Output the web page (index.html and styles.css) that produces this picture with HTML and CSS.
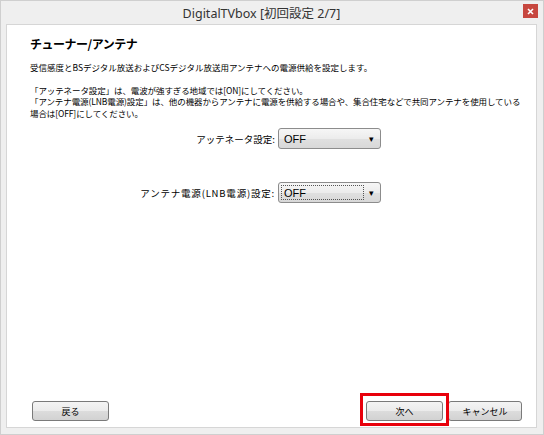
FILE: index.html
```html
<!DOCTYPE html>
<html lang="ja">
<head>
    <meta charset="UTF-8">
    <title>DigitalTVbox [初回設定 2/7]</title>
    <link rel="stylesheet" href="styles.css">
</head>
<body>
    <div class="window">
        <div class="titlebar">
            <span></span>
            <span class="title">DigitalTVbox [初回設定 2/7]</span>
            <span class="close">
                <svg width="7" height="7" viewBox="0 0 7 7">
                    <path d="M1 1 L6 6 M6 1 L1 6" stroke="#fff" stroke-width="1.6"/>
                </svg>
            </span>
        </div>

        <div class="panel">
            <h1>チューナー/アンテナ</h1>
            <p class="lead">受信感度とBSデジタル放送およびCSデジタル放送用アンテナへの電源供給を設定します。</p>
            <p class="note">
                「アッテネータ設定」は、電波が強すぎる地域では[ON]にしてください。<br>
                「アンテナ電源(LNB電源)設定」は、他の機器からアンテナに電源を供給する場合や、集合住宅などで共同アンテナを使用している<br>
                場合は[OFF]にしてください。
            </p>

            <div class="settings">
                <label>アッテネータ設定:</label>
                <div class="combo">
                    <span class="value">OFF</span>
                    <span class="arrow">▾</span>
                </div>

                <label class="wide">アンテナ電源(LNB電源)設定:</label>
                <div class="combo focused">
                    <span class="value">OFF</span>
                    <span class="arrow">▾</span>
                </div>
            </div>

            <div class="footer">
                <button class="btn back">戻る</button>
                <div class="right">
                    <span class="mark">
                        <button class="btn">次へ</button>
                    </span>
                    <button class="btn cancel">キャンセル</button>
                </div>
            </div>
        </div>
    </div>
</body>
</html>
```

FILE: styles.css
```css
body {
    margin: 0;
    font-family: "Noto Sans CJK JP", sans-serif;
    color: #000;
}
.window {
    width: 544px;
    height: 435px;
    box-sizing: border-box;
    border: 1px solid #cfcfcf;
    background-color: #efefef;
    display: flex;
    flex-direction: column;
}
.titlebar {
    height: 23px;
    display: grid;
    grid-template-columns: 1fr auto 1fr;
    align-items: center;
    padding-right: 5px;
}
.title {
    font-family: "Noto Sans", "Noto Sans CJK JP", sans-serif;
    font-size: 12.5px;
    color: #333;
    margin-right: 16px;
}
.close {
    justify-self: end;
    width: 15px;
    height: 14px;
    margin-top: -3px;
    background-color: #c7473f;
    display: flex;
    align-items: center;
    justify-content: center;
}
.panel {
    flex: 1;
    margin: 0 6px 6px 5px;
    background-color: #fff;
    border: 1px solid #d6d6d6;
    padding: 10px 14px 6px 23px;
    display: flex;
    flex-direction: column;
}
h1 {
    margin: 0;
    font-size: 12px;
    letter-spacing: -0.5px;
    line-height: 18px;
    font-weight: bold;
}
p {
    margin: 0;
    font-size: 8.5px;
    line-height: 11.5px;
    white-space: nowrap;
}
.lead {
    margin-top: 9px;
}
.note {
    margin-top: 11px;
    letter-spacing: -0.1px;
}
.settings {
    margin-top: 9px;
    display: grid;
    grid-template-columns: 245px 103px;
    column-gap: 3px;
    row-gap: 33px;
    align-items: center;
}
.settings label {
    text-align: right;
    font-size: 9.5px;
}
.settings label.wide {
    letter-spacing: 0.8px;
}
.combo {
    height: 21px;
    box-sizing: border-box;
    border: 1px solid #8c8c8c;
    border-radius: 3px;
    background: linear-gradient(#f6f6f6, #ececec 50%, #e0e0e0 51%, #d8d8d8);
    display: flex;
    align-items: center;
    padding: 2px;
}
.combo .value {
    flex: 1;
    align-self: stretch;
    display: flex;
    align-items: center;
    padding-left: 2px;
    font-family: "Liberation Sans", sans-serif;
    font-size: 11px;
    border: 1px dotted transparent;
}
.combo.focused .value {
    border-color: #555;
}
.combo .arrow {
    width: 14px;
    font-size: 9px;
    text-align: center;
}
.footer {
    margin-top: auto;
    display: flex;
    justify-content: space-between;
    align-items: center;
}
.right {
    display: flex;
    gap: 5px;
}
.btn {
    width: 77px;
    height: 20px;
    box-sizing: border-box;
    border: 1px solid #7a7a7a;
    border-radius: 3px;
    background: linear-gradient(#f4f4f4, #ebebeb 50%, #dcdcdc 51%, #d2d2d2);
    font-family: "Noto Sans CJK JP", sans-serif;
    font-size: 9px;
    color: #000;
    padding: 0;
    display: block;
}
.back {
    margin-left: 2px;
}
.btn.cancel {
    width: 74px;
}
/* red square drawn round the 次へ button */
.mark {
    position: relative;
    z-index: 1;
    display: block;
    margin: -8px -6px -5px;
    padding: 5px 3px 2px;
    border: 3px solid #e8000b;
}
```
